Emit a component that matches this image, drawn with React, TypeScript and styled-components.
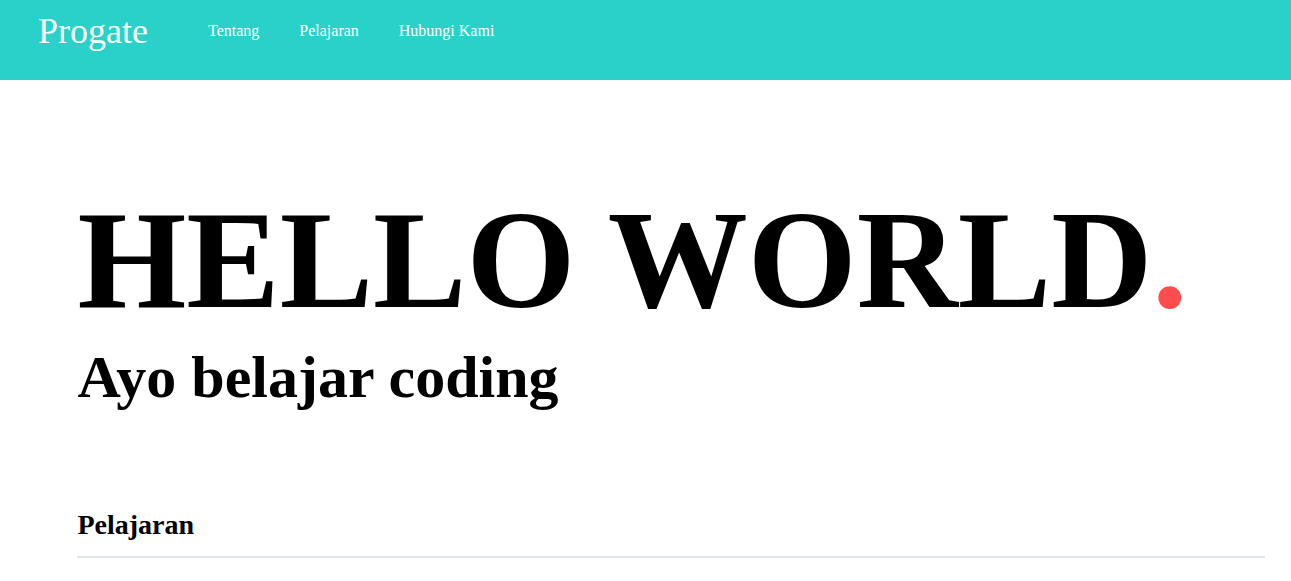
import React from "react";
import styled, { createGlobalStyle } from "styled-components";

const GlobalStyle = createGlobalStyle`
  html, body {
    margin: 0;
    padding: 0;
    background: #ffffff;
    font-family: "Liberation Serif", "Times New Roman", serif;
    color: #000000;
  }
`;

const StyledHeader = styled.header`
  height: 80px;
  background-color: #29d1c9;
  display: flex;
  align-items: flex-start;
  padding-left: 38px;
`;

const StyledLogo = styled.div`
  font-size: 36px;
  line-height: 1;
  color: #ffffff;
  margin-top: 13px;
  margin-right: 60px;
`;

const StyledNav = styled.ul`
  display: flex;
  gap: 40px;
  list-style: none;
  margin: 0;
  padding: 0;
  margin-top: 23px;
`;

const StyledNavItem = styled.li`
  font-size: 16px;
  line-height: 1;
  color: #ffffff;
`;

const StyledMain = styled.main`
  margin-left: 6%;
  width: 92%;
  padding-top: 110px;
  display: flex;
  flex-direction: column;
`;

const StyledTitle = styled.h1`
  margin: 0;
  font-size: 140px;
  font-weight: bold;
  line-height: 1;
  white-space: nowrap;
`;

const StyledDot = styled.span`
  color: #ff4d4d;
`;

const StyledSubtitle = styled.h2`
  margin: 17px 0 0;
  font-size: 60px;
  font-weight: bold;
  line-height: 1;
`;

const StyledSectionTitle = styled.h3`
  margin: 104px 0 0;
  padding-bottom: 17px;
  font-size: 28px;
  font-weight: bold;
  line-height: 1;
  border-bottom: 2px solid #dfe7ea;
`;

const navItems = ["Tentang", "Pelajaran", "Hubungi Kami"];

const App: React.FC = () => {
  return (
    <>
      <GlobalStyle />
      <StyledHeader>
        <StyledLogo>Progate</StyledLogo>
        <StyledNav>
          {navItems.map((item) => (
            <StyledNavItem key={item}>{item}</StyledNavItem>
          ))}
        </StyledNav>
      </StyledHeader>
      <StyledMain>
        <StyledTitle>
          HELLO WORLD<StyledDot>.</StyledDot>
        </StyledTitle>
        <StyledSubtitle>Ayo belajar coding</StyledSubtitle>
        <StyledSectionTitle>Pelajaran</StyledSectionTitle>
      </StyledMain>
    </>
  );
};

export default App;
